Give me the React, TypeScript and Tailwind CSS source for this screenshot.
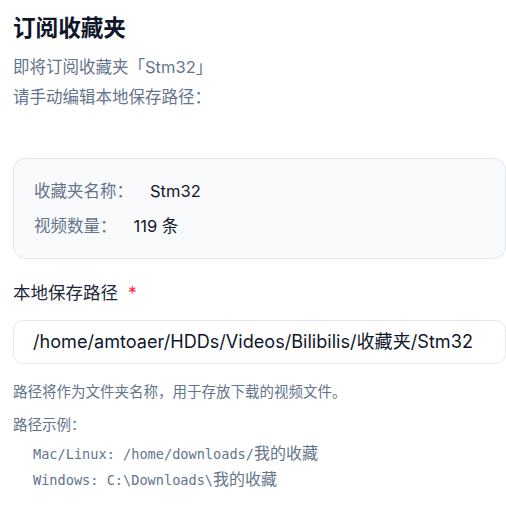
export default function App() {
  const sans = "font-['Inter','Noto_Sans_CJK_SC',sans-serif]"
  return (
    <div className={`min-h-screen bg-white pl-[13px] pt-[12px] ${sans}`}>
      <h2 className="text-[22.6px] leading-[32px] font-bold text-[#0f172a]">订阅收藏夹</h2>
      <div className="mt-[8px] text-[16.5px] leading-[30px] text-[#64748b]">
        <p>即将订阅收藏夹「Stm32」</p>
        <p>请手动编辑本地保存路径：</p>
      </div>

      <div className="mt-[46px] rounded-xl border border-[#e2e8f0] bg-[#f8fafc] pt-[15px] pb-[14px] pl-[20px] text-[16.5px] leading-[35px]">
        <div>
          <span className="text-[#64748b]">收藏夹名称：</span>
          <span className="ml-[17px] text-[#0f172a]">Stm32</span>
        </div>
        <div>
          <span className="text-[#64748b]">视频数量：</span>
          <span className="ml-[17px] text-[#0f172a]">119 条</span>
        </div>
      </div>

      <label className="mt-[21px] block text-[17.5px] leading-[26px] text-[#1e293b]">
        本地保存路径<span className="ml-[10px] text-red-500">*</span>
      </label>
      <div className="mt-[14px] flex h-[44px] items-center rounded-[10px] border border-[#e2e8f0] bg-white pl-[19px] text-[18.1px] text-[#0f172a]">
        /home/amtoaer/HDDs/Videos/Bilibilis/收藏夹/Stm32
      </div>

      <p className="mt-[18px] text-[14.5px] leading-[20px] text-[#64748b]">
        路径将作为文件夹名称，用于存放下载的视频文件。
      </p>
      <p className="mt-[13px] text-[14.5px] leading-[20px] text-[#64748b]">路径示例：</p>
      <div className="mt-[5px] pl-[20px] font-['DejaVu_Sans_Mono',monospace] text-[13.6px] leading-[24px] text-[#64748b]">
        <div>
          Mac/Linux: /home/downloads/<span className="font-['Noto_Sans_CJK_SC',sans-serif] text-[16px]">我的收藏</span>
        </div>
        <div>
          Windows: C:\Downloads\<span className="font-['Noto_Sans_CJK_SC',sans-serif] text-[16px]">我的收藏</span>
        </div>
      </div>
    </div>
  )
}
